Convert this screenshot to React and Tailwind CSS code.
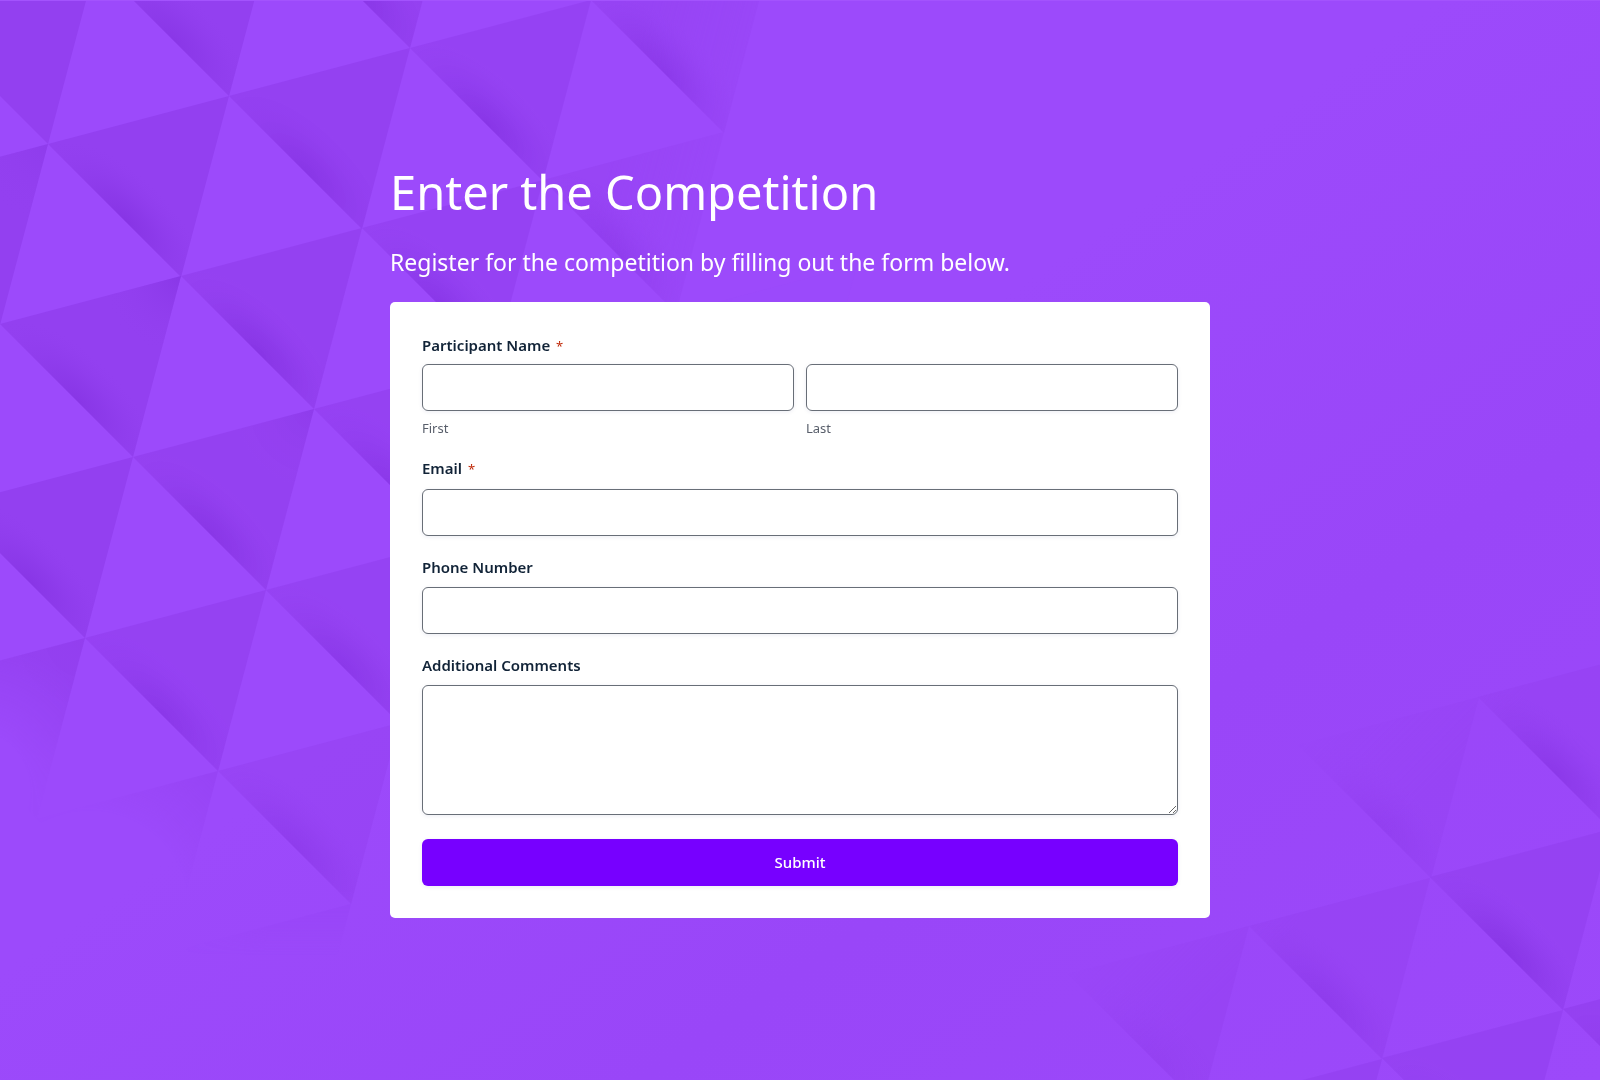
import React, { useState } from 'react';

// Left corner of every shaded facet, plus how strong its fill and crease shadow are
const FACETS = [
  { x: -85, y: 11, fill: 1, crease: 0 },
  { x: 96, y: -37, fill: 1, crease: 0.8 },
  { x: 277, y: -85, fill: 0.9, crease: 0.9 },
  { x: -133, y: 192, fill: 1, crease: 0, corner: 0.4 },
  { x: 48, y: 144, fill: 1, crease: 1 },
  { x: 229, y: 96, fill: 0.95, crease: 0.9 },
  { x: 410, y: 48, fill: 0.75, crease: 1 },
  { x: 591, y: 0, fill: 0.65, crease: 1 },
  { x: 0, y: 324, fill: 1, crease: 0.9, corner: 0.9 },
  { x: 181, y: 276, fill: 0.9, crease: 1 },
  { x: 362, y: 228, fill: 0.75, crease: 0.9 },
  { x: 543, y: 180, fill: 0.5, crease: 0.7 },
  { x: 676, y: 313, fill: 0.2, crease: 0 },
  { x: -48, y: 505, fill: 1, crease: 0.9 },
  { x: 133, y: 457, fill: 0.9, crease: 0.9, corner: 0.5 },
  { x: 314, y: 409, fill: 0.8, crease: 0.8 },
  { x: -96, y: 686, fill: 0.9, crease: 0, corner: 0.2 },
  { x: 85, y: 638, fill: 0.8, crease: 0.8 },
  { x: 266, y: 590, fill: 0.7, crease: 0.8 },
  { x: 37, y: 819, fill: 0.55, crease: 0 },
  { x: 218, y: 771, fill: 0.5, crease: 0.6 },
  { x: 170, y: 952, fill: 0.35, crease: 0 },
  { x: 1298, y: 745, fill: 0.4, crease: 0.4 },
  { x: 1478, y: 697, fill: 0.5, crease: 0.8 },
  { x: 1068, y: 974, fill: 0.5, crease: 0.2 },
  { x: 1249, y: 926, fill: 0.5, crease: 0.6 },
  { x: 1430, y: 877, fill: 0.7, crease: 1 },
  { x: 1201, y: 1107, fill: 0.7, crease: 0 },
  { x: 1382, y: 1058, fill: 0.7, crease: 0.4 },
  { x: 1563, y: 1009, fill: 0.9, crease: 0.8 },
];

const TRIANGLE = 'M0 0L133 133L181 -48Z';

const Backdrop = () => (
  <svg
    className="absolute inset-0 h-full w-full"
    viewBox="0 0 1600 1080"
    preserveAspectRatio="xMidYMid slice"
    aria-hidden="true"
  >
    <defs>
      <linearGradient id="base" x1="0" y1="0" x2="1" y2="1">
        <stop offset="0" stopColor="#9c4afb" />
        <stop offset="0.45" stopColor="#9c4afb" />
        <stop offset="0.7" stopColor="#9946f8" />
        <stop offset="1" stopColor="#9c49fa" />
      </linearGradient>
      <radialGradient
        id="crease"
        gradientUnits="userSpaceOnUse"
        cx="0"
        cy="0"
        r="1"
        gradientTransform="translate(77 77) rotate(45) scale(108 46)"
      >
        <stop offset="0" stopColor="#7d2bdb" stopOpacity="0.55" />
        <stop offset="0.35" stopColor="#8130df" stopOpacity="0.38" />
        <stop offset="0.7" stopColor="#8836e6" stopOpacity="0.16" />
        <stop offset="1" stopColor="#9340f0" stopOpacity="0" />
      </radialGradient>
      <radialGradient id="corner" gradientUnits="userSpaceOnUse" cx="181" cy="-48" r="80">
        <stop offset="0" stopColor="#8130df" stopOpacity="0.6" />
        <stop offset="1" stopColor="#9340f0" stopOpacity="0" />
      </radialGradient>
      <radialGradient id="leftFade" gradientUnits="userSpaceOnUse" cx="-30" cy="790" r="150">
        <stop offset="0.4" stopColor="#000" />
        <stop offset="1" stopColor="#000" stopOpacity="0" />
      </radialGradient>
      <radialGradient id="lowerFade" gradientUnits="userSpaceOnUse" cx="90" cy="910" r="180">
        <stop offset="0.55" stopColor="#000" />
        <stop offset="1" stopColor="#000" stopOpacity="0" />
      </radialGradient>
      <linearGradient id="bottomFade" gradientUnits="userSpaceOnUse" x1="0" y1="890" x2="0" y2="955">
        <stop offset="0" stopColor="#000" stopOpacity="0" />
        <stop offset="1" stopColor="#000" />
      </linearGradient>
      <linearGradient id="topFade" gradientUnits="userSpaceOnUse" x1="650" y1="0" x2="800" y2="38">
        <stop offset="0" stopColor="#000" stopOpacity="0" />
        <stop offset="1" stopColor="#000" stopOpacity="0.8" />
      </linearGradient>
      <linearGradient id="rightFade" gradientUnits="userSpaceOnUse" x1="1020" y1="1020" x2="1110" y2="1110">
        <stop offset="0" stopColor="#000" />
        <stop offset="1" stopColor="#000" stopOpacity="0" />
      </linearGradient>
      <mask id="facetMask" maskUnits="userSpaceOnUse" x="0" y="0" width="1600" height="1080">
        <rect width="1600" height="1080" fill="#fff" />
        <rect width="500" height="1080" fill="url(#leftFade)" />
        <rect width="500" height="1080" fill="url(#lowerFade)" />
        <rect y="890" width="500" height="190" fill="url(#bottomFade)" />
        <rect x="500" width="500" height="400" fill="url(#topFade)" />
        <rect x="1000" y="500" width="600" height="580" fill="url(#rightFade)" />
      </mask>
    </defs>
    <rect width="1600" height="1080" fill="url(#base)" />
    <g mask="url(#facetMask)">
      {FACETS.map((facet) => (
        <g key={`${facet.x}:${facet.y}`} transform={`translate(${facet.x} ${facet.y})`}>
          <path d={TRIANGLE} fill="#9340f0" opacity={facet.fill} />
          {facet.crease > 0 && <path d={TRIANGLE} fill="url(#crease)" opacity={facet.crease} />}
          {facet.corner && <path d={TRIANGLE} fill="url(#corner)" opacity={facet.corner} />}
        </g>
      ))}
    </g>
    <rect width="1600" height="1" fill="#a353fd" />
  </svg>
);

const FIELD =
  'block w-full rounded-md border border-[#686e77] bg-white px-3 text-base text-[#112337] shadow-[0_1px_4px_rgba(18,25,97,0.08)] outline-none focus:border-[#7700ff]';

const LABEL = 'mb-[13px] block text-[15px] leading-[14px] font-semibold text-[#112337]';

const SUB_LABEL = 'mt-2 block text-[13px] leading-[18px] text-[#585e6a]';

const Required = () => <span className="ml-0.5 text-[13px] font-normal text-[#c02b0a]">*</span>;

const TextField = ({ id, label, type = 'text', required, value, onChange }) => (
  <div>
    <label htmlFor={id} className={LABEL}>
      {label} {required && <Required />}
    </label>
    <input id={id} name={id} type={type} required={required} value={value} onChange={onChange} className={`${FIELD} h-[47px]`} />
  </div>
);

const App = () => {
  const [form, setForm] = useState({ first: '', last: '', email: '', phone: '', comments: '' });

  const handleChange = (e) => {
    setForm({ ...form, [e.target.name]: e.target.value });
  };

  const handleSubmit = (e) => {
    e.preventDefault();
  };

  return (
    <div className="relative flex min-h-screen items-center justify-center overflow-hidden bg-[#9c49fb] font-['Noto_Sans',sans-serif]">
      <Backdrop />

      <main className="relative w-full max-w-[820px]">
        {/* Heading */}
        <h1 className="text-[47px] leading-[60px] text-white">Enter the Competition</h1>
        <p className="my-6 text-[23px] leading-8 text-white">
          Register for the competition by filling out the form below.
        </p>

        {/* Form card */}
        <form onSubmit={handleSubmit} className="flex flex-col gap-6 rounded-[5px] bg-white p-8">
          <fieldset>
            <legend className="mb-[6px] text-[15px] leading-[23px] font-semibold text-[#112337]">
              Participant Name <Required />
            </legend>
            <div className="grid grid-cols-2 gap-3">
              <div>
                <input id="first" name="first" type="text" required value={form.first} onChange={handleChange} className={`${FIELD} h-[47px]`} />
                <label htmlFor="first" className={SUB_LABEL}>First</label>
              </div>
              <div>
                <input id="last" name="last" type="text" required value={form.last} onChange={handleChange} className={`${FIELD} h-[47px]`} />
                <label htmlFor="last" className={SUB_LABEL}>Last</label>
              </div>
            </div>
          </fieldset>

          <TextField id="email" label="Email" type="email" required value={form.email} onChange={handleChange} />
          <TextField id="phone" label="Phone Number" type="tel" value={form.phone} onChange={handleChange} />

          <div>
            <label htmlFor="comments" className={LABEL}>
              Additional Comments
            </label>
            <textarea id="comments" name="comments" value={form.comments} onChange={handleChange} className={`${FIELD} h-[130px] resize-y py-2`} />
          </div>

          <button
            type="submit"
            className="h-[47px] rounded-md bg-[#7700ff] text-[15px] font-medium text-white shadow-[0_1px_4px_rgba(18,25,97,0.08)] hover:bg-[#6a00e6]"
          >
            Submit
          </button>
        </form>
      </main>
    </div>
  );
};

export default App;
